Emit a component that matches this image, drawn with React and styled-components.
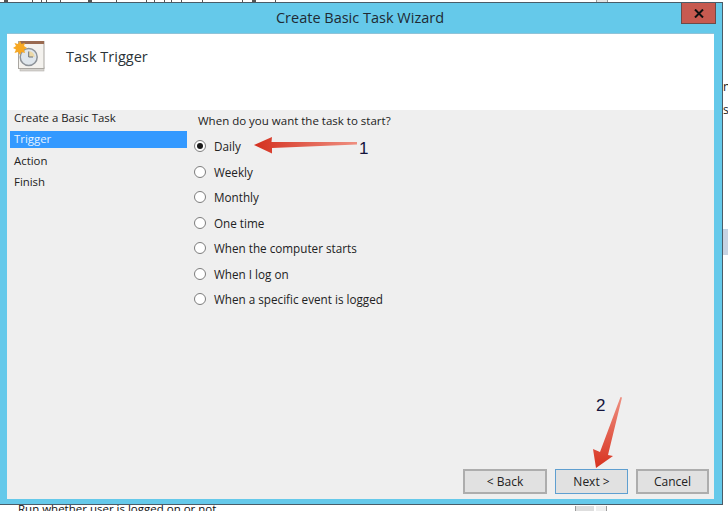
import styled, { createGlobalStyle } from "styled-components";

const triggers = [
  "Daily",
  "Weekly",
  "Monthly",
  "One time",
  "When the computer starts",
  "When I log on",
  "When a specific event is logged",
];
const steps = ["Create a Basic Task", "Trigger", "Action", "Finish"];
// bottoms of the letters of the page behind the window
const ticks = [
  [4, 4], [32, 1], [41, 1], [46, 1], [60, 1], [88, 4], [116, 1], [146, 1],
  [154, 1], [164, 1], [171, 1], [181, 1], [202, 1], [242, 1], [252, 4], [275, 1],
];

const App = () => {
  return (
    <Screen>
      <GlobalStyle />
      {ticks.map(([left, width]) => (
        <Tick key={left} left={left} width={width} />
      ))}
      <TopStub />
      <Window>
        <TitleBar>
          <span />
          <Title>Create Basic Task Wizard</Title>
          <CloseButton>
            <svg width="10" height="9" viewBox="0 0 10 9">
              <path d="M1 .5l8 8M9 .5l-8 8" stroke="#111" strokeWidth="2" fill="none" />
            </svg>
          </CloseButton>
        </TitleBar>
        <Client>
          <Header>
            <TaskIcon />
            <HeaderTitle>Task Trigger</HeaderTitle>
          </Header>
          <Body>
            <Main>
              <Sidebar>
                {steps.map((step) => (
                  <Step key={step} active={step === "Trigger"}>
                    {step}
                  </Step>
                ))}
              </Sidebar>
              <Content>
                <Question>When do you want the task to start?</Question>
                <RadioList>
                  {triggers.map((label, i) => (
                    <RadioRow key={label}>
                      <Radio checked={i === 0} />
                      {label}
                    </RadioRow>
                  ))}
                </RadioList>
              </Content>
            </Main>
            <Footer>
              <WizardButton width={84}>&lt; Back</WizardButton>
              <WizardButton width={73} focused>
                Next &gt;
              </WizardButton>
              <WizardButton width={73}>Cancel</WizardButton>
            </Footer>
          </Body>
        </Client>
      </Window>
      <BehindRight top={80}>n</BehindRight>
      <BehindRight top={103}>s</BehindRight>
      <ScrollStub />
      <BehindBottom>Run whether user is logged on or not</BehindBottom>
      <BottomStub />
      <Arrows width="728" height="511" viewBox="0 0 728 511">
        <defs>
          <linearGradient id="shaftA" x1="0" x2="1" y1="0" y2="0">
            <stop offset="0" stopColor="#d4301f" />
            <stop offset="1" stopColor="#ef8f80" />
          </linearGradient>
          <linearGradient id="shaftB" x1="0" x2="0" y1="0" y2="1">
            <stop offset="0" stopColor="#ee8f80" />
            <stop offset="1" stopColor="#d8321f" />
          </linearGradient>
        </defs>
        <path d="M254 145L272 137L271.500 142L357 142L357 144.500L272 148L272 153.500Z" fill="url(#shaftA)" />
        <path d="M596 468L593 449L600 452L620.500 397L622 397.500L608 455L613 456Z" fill="url(#shaftB)" />
      </Arrows>
      <Callout left={359} top={139}>1</Callout>
      <Callout left={596} top={396}>2</Callout>
    </Screen>
  );
};

export default App;

const TaskIcon = () => (
  <svg width="34" height="34" viewBox="0 0 34 34">
    <rect x="7" y="27" width="24" height="4" fill="#d4d2ce" stroke="#b5b2ad" strokeWidth=".6" />
    <rect x="5.500" y="1.500" width="25.500" height="27" fill="#f4f2ee" stroke="#a9a6a1" />
    <rect x="7" y="1" width="24" height="3" fill="#9a6a50" />
    <circle cx="15.700" cy="17" r="8.500" fill="#dfe6ec" stroke="#8d9298" strokeWidth="1.500" />
    <path d="M15.700 17V11A6 6 0 0 1 21.700 17Z" fill="#ecd9a8" />
    <path d="M15.700 11.500V17H20" stroke="#6d7278" fill="none" />
    <path
      d="M6 1L7.500 4L11 3L10 6L13 8L10 9.500L11 13L7.500 12L6 15L4 12L.5 13L2 9.500L-1 8L2 6L.5 3L4 4Z"
      fill="#f7a823"
      transform="translate(1 0)"
    />
  </svg>
);

const GlobalStyle = createGlobalStyle`
  html, body {
    margin: 0;
    padding: 0;
    background: #ffffff;
  }
`;

const Screen = styled.div`
  position: relative;
  width: 728px;
  height: 511px;
  overflow: hidden;
  padding-top: 2px;
  box-sizing: border-box;
  background: #ffffff;
  font-family: "Open Sans", "Noto Sans", sans-serif;
  font-size: 12px;
  color: #222222;
`;

const Tick = styled.span`
  position: absolute;
  left: ${(props) => props.left}px;
  top: 0;
  width: ${(props) => props.width}px;
  height: 2px;
  background: #555555;
`;

const TopStub = styled.span`
  position: absolute;
  left: 596px;
  top: 0;
  width: 10px;
  height: 2px;
  background: #e4e4e4;
  border: solid #9a9a9a;
  border-width: 0 1px;
`;

const Window = styled.div`
  width: 723px;
  height: 503px;
  box-sizing: border-box;
  display: flex;
  flex-direction: column;
  background: #65c9ea;
  border: 1px solid #4a5c68;
  border-left: none;
`;

const TitleBar = styled.div`
  height: 30px;
  display: grid;
  grid-template-columns: 1fr auto 1fr;
  align-items: start;
  flex-shrink: 0;
`;

const Title = styled.div`
  font-size: 14.500px;
  line-height: 30px;
  margin-right: 2px;
  color: #1f2a33;
`;

const CloseButton = styled.div`
  justify-self: end;
  width: 35px;
  height: 21px;
  margin-right: 6px;
  display: flex;
  align-items: center;
  justify-content: center;
  background: #c75a50;
  border: 1px solid #6d4a48;
  border-top: none;
  box-sizing: border-box;
`;

const Client = styled.div`
  flex: 1;
  margin: 0 8px 5px 7px;
  display: flex;
  flex-direction: column;
  border-top: 1px solid #8fc3d8;
  min-height: 0;
`;

const Header = styled.div`
  height: 76px;
  flex-shrink: 0;
  box-sizing: border-box;
  background: #ffffff;
  display: flex;
  align-items: flex-start;
  padding: 6px 0 0 6px;
`;

const HeaderTitle = styled.div`
  font-size: 14.500px;
  line-height: 20px;
  margin: 7px 0 0 19px;
  color: #2b3338;
`;

const Body = styled.div`
  flex: 1;
  min-height: 0;
  background: #efefef;
  display: flex;
  flex-direction: column;
`;

const Main = styled.div`
  flex: 1;
  display: flex;
  min-height: 0;
`;

const Sidebar = styled.div`
  width: 177px;
  margin-left: 3px;
  font-size: 11.400px;
`;

const Step = styled.div`
  height: 21.300px;
  line-height: 16px;
  padding: 0 4px;
  color: ${(props) => (props.active ? "#e6f2ff" : "#222222")};
  background: ${(props) =>
    props.active ? "linear-gradient(#3399ff 0 17px, transparent 17px)" : "none"};
`;

const Content = styled.div`
  flex: 1;
  padding: 3px 0 0 11px;
`;

const Question = styled.div`
  font-size: 11.500px;
  line-height: 16px;
`;

const RadioList = styled.div`
  display: flex;
  flex-direction: column;
  gap: 9.500px;
  margin-top: 9px;
  margin-left: -4px;
  font-size: 11.700px;
`;

const RadioRow = styled.div`
  height: 16px;
  display: flex;
  align-items: center;
  gap: 8px;
`;

const Radio = styled.span`
  width: 12px;
  height: 12px;
  box-sizing: border-box;
  border-radius: 50%;
  border: 1px solid #7d7d7d;
  background: #ffffff;
  display: flex;
  align-items: center;
  justify-content: center;

  &::after {
    content: "";
    width: 6px;
    height: 6px;
    border-radius: 50%;
    background: ${(props) => (props.checked ? "#1a1a1a" : "transparent")};
  }
`;

const Footer = styled.div`
  display: flex;
  justify-content: flex-end;
  gap: 8px;
  padding: 0 5px 5px 0;
`;

const WizardButton = styled.div`
  width: ${(props) => props.width}px;
  height: 25px;
  box-sizing: border-box;
  display: flex;
  align-items: center;
  justify-content: center;
  background: #e1e1e1;
  border: ${(props) => (props.focused ? "1px solid #5f9fd0" : "2px solid #adadad")};
`;

const BehindRight = styled.div`
  position: absolute;
  left: 723px;
  top: ${(props) => props.top}px;
  line-height: 14px;
`;

const ScrollStub = styled.div`
  position: absolute;
  left: 723px;
  top: 229px;
  width: 5px;
  height: 26px;
  background: #c7d3e3;
`;

const BehindBottom = styled.div`
  position: absolute;
  left: 18px;
  top: 502px;
  font-size: 11.500px;
  line-height: 14px;
  color: #111111;
`;

const BottomStub = styled.span`
  position: absolute;
  left: 575px;
  top: 506px;
  width: 32px;
  height: 5px;
  box-sizing: border-box;
  background: linear-gradient(90deg, #dedede 0 18px, #ffffff 18px 20px, #eeeeee 20px);
  border: solid #9a9a9a;
  border-width: 0 1px;
`;

const Arrows = styled.svg`
  position: absolute;
  inset: 0;
  pointer-events: none;
`;

const Callout = styled.div`
  position: absolute;
  left: ${(props) => props.left}px;
  top: ${(props) => props.top}px;
  font-family: "Liberation Sans", sans-serif;
  font-size: 17px;
  line-height: 19px;
  color: #14143c;
`;
